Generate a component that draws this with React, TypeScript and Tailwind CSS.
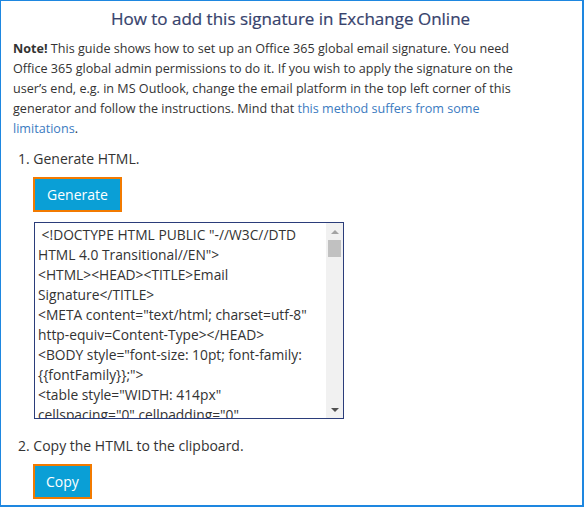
import { useState } from 'react';

const SIGNATURE_HTML = ` <!DOCTYPE HTML PUBLIC "-//W3C//DTD HTML 4.0 Transitional//EN">
<HTML><HEAD><TITLE>Email Signature</TITLE>
<META content="text/html; charset=utf-8" http-equiv=Content-Type></HEAD>
<BODY style="font-size: 10pt; font-family: {{fontFamily}};">
<table style="WIDTH: 414px"
cellspacing="0" cellpadding="0"
border="0">
<tbody>
<tr>
<td style="padding-right: 10px">
</td>
</tr>
</tbody>
</table>
</BODY>
</HTML>`;

export default function App() {
    const [html] = useState(SIGNATURE_HTML);

    return (
        <div className="w-[584px] h-[507px] bg-white border-l border-t border-r-2 border-b-2 border-[#1e87e0] font-['Open_Sans',sans-serif] text-[#333333] overflow-hidden">
            <h2 className="text-center text-[17px] leading-[22px] font-medium text-[#36426c] pt-[7px] pr-[2px] [-webkit-text-stroke:0.2px_#36426c]">
                How to add this signature in Exchange Online
            </h2>
            <p className="mt-[9px] ml-[12px] w-[502px] text-[12.6px] leading-[20px]">
                <b className="font-bold">Note!</b> This guide shows how to set up an Office 365 global email signature. You need
                Office 365 global admin permissions to do it. If you wish to apply the signature on the
                user’s end, e.g. in MS Outlook, change the email platform in the top left corner of this
                generator and follow the instructions. Mind that{' '}
                <a href="#" className="text-[#3b7bbf]">this method suffers from some limitations</a>.
            </p>

            <ol className="mt-[10px] pl-[17px] text-[14px] leading-[20px]">
                <li className="flex flex-col items-start">
                    <span>1. Generate HTML.</span>
                    <button className="mt-[8px] ml-[15px] h-[35px] px-[12px] bg-[#0a9fd6] text-white text-[14px] border-2 border-[#f27a00]">
                        Generate
                    </button>
                    <div className="mt-[10px] ml-[16px] w-[310px] h-[197px] flex border border-[#2b3d7a]">
                        <textarea
                            readOnly
                            value={html}
                            className="flex-1 h-full pl-[3px] pr-[1px] pt-[2px] text-[13.8px] leading-[20px] text-[#333333] resize-none outline-none overflow-hidden [scrollbar-width:none]"
                        />
                        <div className="w-[17px] h-full bg-[#f1f1f1] flex flex-col items-center">
                            <div className="h-[17px] flex items-center justify-center">
                                <div className="w-0 h-0 border-l-[4px] border-r-[4px] border-b-[4px] border-l-transparent border-r-transparent border-b-[#a3a3a3]" />
                            </div>
                            <div className="w-[13px] h-[17px] bg-[#c1c1c1]" />
                            <div className="flex-1" />
                            <div className="h-[17px] flex items-center justify-center">
                                <div className="w-0 h-0 border-l-[4px] border-r-[4px] border-t-[4px] border-l-transparent border-r-transparent border-t-[#505050]" />
                            </div>
                        </div>
                    </div>
                </li>
                <li className="flex flex-col items-start mt-[17px]">
                    <span>2. Copy the HTML to the clipboard.</span>
                    <button className="mt-[8px] ml-[15px] h-[35px] px-[11px] bg-[#0a9fd6] text-white text-[14px] border-2 border-[#f27a00]">
                        Copy
                    </button>
                </li>
            </ol>
        </div>
    );
}
